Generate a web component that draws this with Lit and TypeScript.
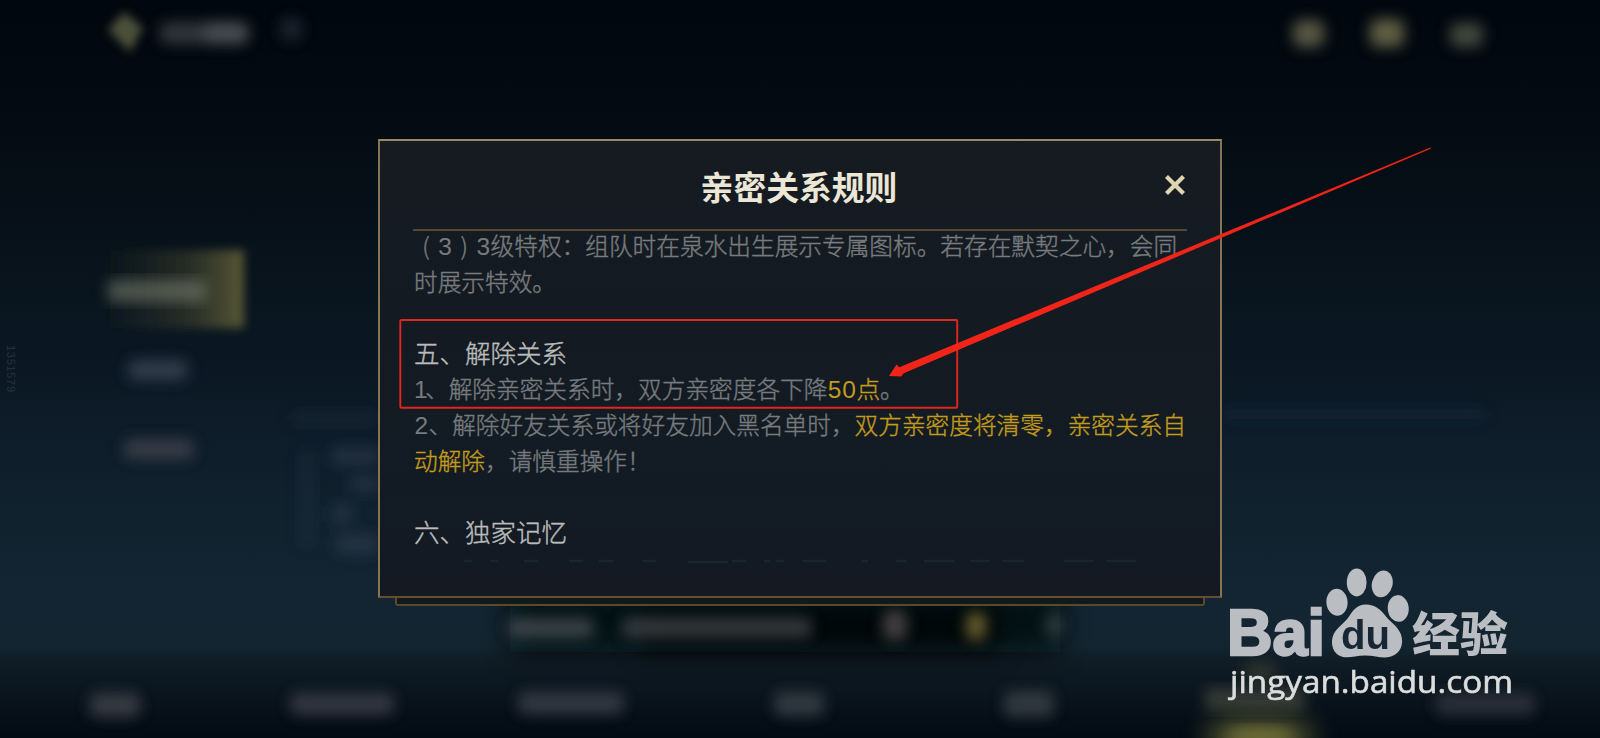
import { LitElement, html, css, svg } from "lit";
import { customElement } from "lit/decorators.js";

type Glow = [x: number, y: number, w: number, h: number, fill: string, opacity: number];

const GLOWS: Glow[] = [
  [160, 22, 88, 22, "#6a6c72", 0.45],
  [205, 22, 44, 22, "#777", 0.35],
  [280, 17, 22, 24, "#4a5566", 0.35],
  [1293, 20, 31, 27, "#86805f", 0.65],
  [1370, 19, 34, 28, "#86825a", 0.7],
  [1450, 23, 33, 24, "#707560", 0.58],
  [128, 360, 60, 20, "#56606e", 0.5],
  [124, 439, 70, 20, "#5d5a60", 0.5],
  [290, 412, 90, 12, "#2a3444", 0.3],
  [1222, 408, 265, 12, "#243444", 0.3],
  [330, 447, 50, 18, "#3a4656", 0.45],
  [350, 476, 30, 16, "#3a4656", 0.45],
  [332, 504, 20, 20, "#3a4656", 0.45],
  [335, 534, 44, 20, "#3a4656", 0.45],
  [300, 448, 14, 100, "#2a3a4a", 0.25],
  [90, 693, 50, 24, "#55565c", 0.6],
  [290, 693, 104, 22, "#55535c", 0.55],
  [518, 692, 106, 22, "#55555f", 0.55],
  [774, 692, 50, 24, "#4d5258", 0.6],
  [1004, 691, 50, 26, "#4d5456", 0.6],
  [1435, 693, 100, 22, "#4c4c56", 0.5],
];

const PLATE_GLOWS: Glow[] = [
  [508, 618, 86, 20, "#5c6065", 0.6],
  [622, 617, 190, 21, "#5a5d5e", 0.55],
  [883, 610, 24, 30, "#6d6462", 0.6],
  [966, 612, 20, 28, "#8f7c3c", 0.7],
  [1046, 614, 16, 22, "#4b5550", 0.6],
];

const glow = ([x, y, w, h, fill, o]: Glow) =>
  svg`<rect x=${x} y=${y} width=${w} height=${h} rx="8" fill=${fill} opacity=${o} />`;

@customElement("blurred-lobby")
class BlurredLobby extends LitElement {
  static styles = css`
    :host { display: block; }
    svg { display: block; width: 100%; height: 100%; }
    .serial { font: 11px "Liberation Sans", sans-serif; fill: #28333a; }
  `;
  render() {
    return html`<svg viewBox="0 0 1600 738" aria-hidden="true">
      <defs>
        <linearGradient id="sky" x1="0" y1="0" x2="0" y2="1">
          <stop offset="0" stop-color="#01070e" />
          <stop offset="0.18" stop-color="#040b13" />
          <stop offset="0.36" stop-color="#08131b" />
          <stop offset="0.5" stop-color="#0b1824" />
          <stop offset="0.66" stop-color="#10202d" />
          <stop offset="0.8" stop-color="#132532" />
          <stop offset="0.875" stop-color="#132530" />
          <stop offset="0.89" stop-color="#111e27" />
          <stop offset="0.95" stop-color="#09131c" />
          <stop offset="1" stop-color="#020a14" />
        </linearGradient>
        <linearGradient id="tab" x1="0" y1="0" x2="1" y2="0">
          <stop offset="0" stop-color="#3d3d2c" stop-opacity="0" />
          <stop offset="0.6" stop-color="#46462f" stop-opacity="0.5" />
          <stop offset="1" stop-color="#66643a" stop-opacity="0.85" />
        </linearGradient>
        <filter id="soft" x="-20%" y="-30%" width="140%" height="160%"><feGaussianBlur stdDeviation="7" /></filter>
        <filter id="edge" x="-30%" y="-30%" width="160%" height="160%"><feGaussianBlur stdDeviation="5" /></filter>
        <filter id="wide" x="-50%" y="-60%" width="200%" height="220%"><feGaussianBlur stdDeviation="14" /></filter>
      </defs>
      <rect width="1600" height="738" fill="url(#sky)" />
      <rect x="510" y="590" width="550" height="62" fill="#02070b" opacity="0.8" filter="url(#wide)" />
      <rect x="640" y="604" width="360" height="46" fill="#010405" opacity="0.6" filter="url(#wide)" />
      <rect x="104" y="250" width="140" height="78" fill="url(#tab)" filter="url(#edge)" />
      <rect x="108" y="280" width="98" height="22" fill="#7d8272" opacity="0.55" filter="url(#soft)" />
      <path d="M108 30 124 12 143 28 130 52Z" fill="#6c6e4c" opacity="0.7" filter="url(#edge)" />
      <g filter="url(#soft)">${GLOWS.map(glow)}${PLATE_GLOWS.map(glow)}</g>
      <rect x="1205" y="688" width="100" height="22" fill="#62614f" opacity="0.5" filter="url(#soft)" />
      <ellipse cx="1260" cy="738" rx="55" ry="17" fill="#8a8840" opacity="0.75" filter="url(#wide)" />
      <ellipse cx="1260" cy="736" rx="34" ry="8" fill="#8a8840" opacity="0.5" filter="url(#soft)" />
      <ellipse cx="1260" cy="672" rx="18" ry="10" fill="#5d5c3a" opacity="0.4" filter="url(#soft)" />
      <text class="serial" transform="translate(7 345) rotate(90)" textLength="47">1351579</text>
    </svg>`;
  }
}

@customElement("rules-dialog")
class RulesDialog extends LitElement {
  static styles = css`
    :host {
      display: flex;
      flex-direction: column;
      align-items: center;
      font-family: "Noto Sans CJK SC", sans-serif;
      text-spacing-trim: space-all;
    }
    .frame {
      box-sizing: border-box;
      width: 844px;
      height: 459px;
      border: 2.5px solid;
      border-color: #998965 #857553 #625030 #857553;
      background: linear-gradient(#151b21, #141a22 40%, #121b24 75%, #141922);
      padding: 0 33px;
      display: flex;
      flex-direction: column;
    }
    .lip {
      box-sizing: border-box;
      width: 810px;
      height: 8px;
      border: 2px solid #5a492d;
      border-top: 0;
      border-radius: 0 0 3px 3px;
      background: #11191b;
    }
    .head {
      display: grid;
      grid-template-columns: 24px 1fr 24px;
      align-items: center;
      height: 88px;
      border-bottom: 2px solid #554a31;
      flex: none;
    }
    h1 {
      grid-column: 2;
      margin: 0 0 0 -2px;
      padding-top: 2px;
      text-align: center;
      font-size: 32.8px;
      line-height: 40px;
      font-weight: 700;
      color: #ebe6d6;
    }
    .close { width: 24px; height: 24px; display: block; }
    .body {
      margin-top: -3px;
      padding-left: 1px;
      color: #777b7d;
      font-size: 23.68px;
      white-space: nowrap;
      -webkit-text-stroke-width: 0.4px;
    }
    p, h2 { margin: 0; height: 35.8px; line-height: 35.8px; font-weight: 300; }
    h2 { font-size: 25.5px; line-height: 34.6px; color: #b9bcba; }
    .gap { height: 35.8px; }
    .n { display: inline-block; text-align: center; font-family: "Liberation Sans", sans-serif; font-size: 24.5px; line-height: 1; -webkit-text-stroke-width: 0; }
    .n11 { width: 11px; }
    .n14 { width: 14.5px; }
    .open { display: inline-block; width: 23.8px; text-align: center; }
    b { font-weight: 300; color: #c29a1c; }
    .fade { display: block; margin-top: 4px; }
  `;
  render() {
    return html`
      <section class="frame">
        <header class="head">
          <h1>亲密关系规则</h1>
          <svg class="close" viewBox="0 0 24 24"><path d="M3.5 3.5 20.5 20.5M20.5 3.5 3.5 20.5" stroke="#ddd4b0" stroke-width="4.2" /></svg>
        </header>
        <div class="body">
          <p><span class="open">(</span><span class="n n14">3</span><span class="open">)</span><span class="n n14">3</span>级特权：组队时在泉水出生展示专属图标。若存在默契之心，会同</p>
          <p>时展示特效。</p>
          <div class="gap"></div>
          <h2>五、解除关系</h2>
          <p><span class="n n11">1</span>、解除亲密关系时，双方亲密度各下降<b><span class="n n14">5</span><span class="n n14">0</span>点</b>。</p>
          <p><span class="n n14">2</span>、解除好友关系或将好友加入黑名单时，<b>双方亲密度将清零，亲密关系自</b></p>
          <p><b>动解除</b>，请慎重操作！</p>
          <div class="gap"></div>
          <h2>六、独家记忆</h2>
          <svg class="fade" width="770" height="14" fill="none" stroke="#1b252d" stroke-width="2.6">
            <path d="M50 7h8M76 7h8M110 7h14M155 7h14M185 7h14M228 7h14M274 8h40M318 7h14M350 7h6M362 7h8M388 7h24M448 7h6M482 7h10M510 7h30M556 7h20M588 7h22M650 7h30M692 7h30" />
          </svg>
        </div>
      </section>
      <div class="lip"></div>
    `;
  }
}

@customElement("site-watermark")
class SiteWatermark extends LitElement {
  static styles = css`
    :host { display: block; }
    svg { display: block; }
    .bai { font: 700 64px "Liberation Sans", sans-serif; stroke: #babdc2; stroke-width: 2.4; }
    .du { font: 700 40px "Liberation Sans", sans-serif; fill: #182735; }
    .cn { font: 900 47px "Noto Sans CJK SC", sans-serif; }
    .url { font: 400 31px "Open Sans", sans-serif; fill: #dcdddd; stroke: #dcdddd; stroke-width: 0.6; }
  `;
  render() {
    return html`<svg width="300" height="150" viewBox="1220 560 300 150" fill="#babdc2">
      <text class="bai" x="1227" y="654.6" textLength="98" lengthAdjust="spacingAndGlyphs">Bai</text>
      <ellipse cx="1337" cy="602.3" rx="10.6" ry="13.5" transform="rotate(-4 1337 602.3)" />
      <ellipse cx="1356.7" cy="582.4" rx="9.9" ry="14" />
      <ellipse cx="1382.2" cy="583.8" rx="10.3" ry="13.6" transform="rotate(14 1382 584)" />
      <ellipse cx="1398.2" cy="608.5" rx="10.5" ry="13.4" transform="rotate(-5 1398 608)" />
      <path d="M1366 604.5c-9 0-13 6-17 12-4 6-11 10-15 17-4 8-2 18 5 22 8 4 15 0 26 0s18 4 26 1c10-3 13-13 10-22-3-8-10-12-15-18-5-7-11-12-20-12z" />
      <text class="du" x="1341" y="649" textLength="49" lengthAdjust="spacingAndGlyphs">du</text>
      <text class="cn" x="1412" y="651" textLength="96" lengthAdjust="spacingAndGlyphs">经验</text>
      <text class="url" x="1230" y="692.8" textLength="283" lengthAdjust="spacingAndGlyphs">jingyan.baidu.com</text>
    </svg>`;
  }
}

@customElement("app-root")
class AppRoot extends LitElement {
  static styles = css`
    :host { display: grid; width: 1600px; height: 738px; overflow: hidden; background: #040b13; }
    :host > * { grid-area: 1 / 1; }
    rules-dialog { justify-self: center; align-self: start; padding-top: 139px; }
    site-watermark { justify-self: end; align-self: end; padding: 0 80px 28px 0; }
    .marks { width: 1600px; height: 738px; display: block; z-index: 2; }
  `;
  render() {
    return html`
      <blurred-lobby></blurred-lobby>
      <rules-dialog></rules-dialog>
      <site-watermark></site-watermark>
      <svg class="marks" viewBox="0 0 1600 738">
        <rect x="400.3" y="320" width="556.9" height="87.7" rx="1" fill="none" stroke="#e0261f" stroke-width="1.9" />
        <path d="M1430.3 147.6 899.3 367.2 896.5 364.5 889 376 901.5 376.6 903.2 373.5 1430.6 148.8Z" fill="#f02418" />
      </svg>
    `;
  }
}
